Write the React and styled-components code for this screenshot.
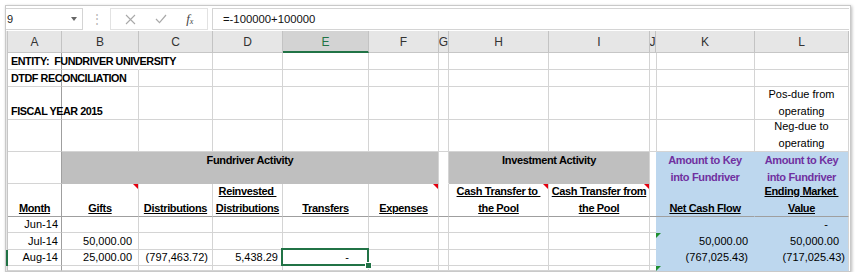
import React from "react";
import styled, { createGlobalStyle, css } from "styled-components";

const GRID = "#d4d4d4";
const FREEZE = "#9f9f9f";
const BLUE = "#bdd7ee";
const GRAY = "#bfbfbf";
const GREEN = "#217346";

const GlobalStyle = createGlobalStyle`
  html, body {
    margin: 0;
    background: #fff;
    font-family: "Liberation Sans", Arial, sans-serif;
  }
`;

const Window = styled.div`
  margin: 5px 0 0 5px;
  width: 844px;
  height: 265px;
  border: 1px solid #c9c9c9;
  box-shadow: 1px 1px 3px rgba(0, 0, 0, 0.28);
  background: #fff;
  overflow: hidden;
`;

const Toolbar = styled.div`
  height: 25px;
  display: flex;
  align-items: center;
  box-sizing: border-box;
  padding-top: 1px;
`;

const NameBox = styled.div`
  width: 77px;
  height: 22px;
  box-sizing: border-box;
  border: 1px solid #d4d4d4;
  border-left: none;
  display: flex;
  align-items: center;
  justify-content: space-between;
  padding: 0 5px 0 1px;
  font-size: 11px;
  color: #222;
`;

const DropArrow = styled.span`
  width: 0;
  height: 0;
  border-left: 3.5px solid transparent;
  border-right: 3.5px solid transparent;
  border-top: 4px solid #666;
`;

const Grip = styled.div`
  width: 27px;
  text-align: center;
  color: #b5b5b5;
  font-size: 12px;
  line-height: 1;
`;

const FxGroup = styled.div`
  width: 98px;
  height: 22px;
  box-sizing: border-box;
  border: 1px solid #e2e2e2;
  display: flex;
  align-items: center;
  justify-content: space-around;
  padding: 0 4px;
`;

const FxText = styled.span`
  font-family: "Liberation Serif", "Times New Roman", serif;
  font-style: italic;
  font-size: 13px;
  color: #444;

  sub {
    font-size: 8px;
    vertical-align: -1px;
  }
`;

const FormulaInput = styled.div`
  flex: 1;
  margin-left: 4px;
  margin-right: 1px;
  height: 22px;
  box-sizing: border-box;
  border: 1px solid #d4d4d4;
  border-right: none;
  display: flex;
  align-items: center;
  padding-left: 10px;
  font-size: 11.3px;
  color: #111;
`;

const Sheet = styled.div`
  display: grid;
  grid-template-columns: 2px 54px 77px 74px 70px 86px 70px 10px 100px 101px 6px 99px 94px;
  grid-template-rows: 22px 17px 17px 33px 32px 32px 33px 16px 17px 16px 5px;
  font-size: 11px;
`;

const Stub = styled.div`
  background: ${(p) => (p.$on ? GREEN : "#e6e6e6")};
  border-right: ${(p) => (p.$on ? "none" : "1px solid #c6c6c6")};
  box-sizing: border-box;
`;

const ColHead = styled.div`
  box-sizing: border-box;
  background: ${(p) => (p.$active ? "#d3d3d3" : "#e6e6e6")};
  border-right: 1px solid #c3c3c3;
  border-bottom: ${(p) => (p.$active ? `2px solid ${GREEN}` : "1px solid #c6c6c6")};
  color: ${(p) => (p.$active ? GREEN : "#333")};
  display: flex;
  align-items: flex-end;
  justify-content: center;
  padding-bottom: ${(p) => (p.$active ? 2 : 3)}px;
  font-size: 12px;
  overflow: hidden;
`;

const Cell = styled.div`
  box-sizing: border-box;
  min-width: 0;
  position: relative;
  display: flex;
  flex-direction: column;
  justify-content: ${(p) =>
    p.$v === "top" ? "flex-start" : p.$v === "mid" ? "center" : "flex-end"};
  align-items: ${(p) =>
    p.$h === "left" ? "flex-start" : p.$h === "center" ? "center" : "flex-end"};
  text-align: ${(p) => p.$h || "right"};
  padding: 0 ${(p) => p.$pr ?? 3}px 0 ${(p) => p.$pl ?? 3}px;
  background: ${(p) => p.$bg || "transparent"};
  border-right: 1px solid ${(p) => p.$rc || GRID};
  border-bottom: 1px solid ${(p) => p.$bc || GRID};
  grid-column: ${(p) => (p.$span ? `span ${p.$span}` : "auto")};
  font-weight: ${(p) => (p.$bold ? 700 : 400)};
  letter-spacing: ${(p) => (p.$bold ? "-0.35px" : "0")};
  font-size: 11px;
  color: ${(p) => p.$color || "#000"};
  line-height: 16.5px;
  white-space: pre;

  ${(p) =>
    p.$note &&
    css`
      &::after {
        content: "";
        position: absolute;
        top: 0;
        right: 0;
        border-top: 5px solid #e3000f;
        border-left: 5px solid transparent;
      }
    `}

  ${(p) =>
    p.$err &&
    css`
      &::before {
        content: "";
        position: absolute;
        top: 0;
        left: 0;
        border-top: 5px solid #1e8e2e;
        border-right: 5px solid transparent;
      }
    `}

  ${(p) =>
    p.$sel &&
    css`
      &::after {
        content: "";
        position: absolute;
        top: -2px;
        left: -2px;
        right: -1px;
        bottom: -1px;
        border: 2px solid ${GREEN};
        z-index: 2;
      }
      &::before {
        content: "";
        position: absolute;
        right: -4px;
        bottom: -4px;
        width: 5px;
        height: 5px;
        background: ${GREEN};
        border: 1px solid #fff;
        z-index: 3;
      }
    `}
`;

const Title = styled.span`
  font-size: 10.8px;
  letter-spacing: -0.45px;
`;

const U = styled.span`
  text-decoration: underline;
  text-underline-offset: 1px;
`;

const XIcon = () => (
  <svg width="11" height="11" viewBox="0 0 11 11">
    <path d="M1 1 L10 10 M10 1 L1 10" stroke="#a9a9a9" strokeWidth="1.1" fill="none" />
  </svg>
);

const CheckIcon = () => (
  <svg width="12" height="10" viewBox="0 0 12 10">
    <path d="M1 5 L4.5 8.6 L11 1" stroke="#a9a9a9" strokeWidth="1.2" fill="none" />
  </svg>
);

const letters = ["A", "B", "C", "D", "E", "F", "G", "H", "I", "J", "K", "L"];

const Blue = (props) => <Cell $bg={BLUE} $rc={BLUE} $bc={BLUE} {...props} />;

const Empty = ({ n }) => Array.from({ length: n }, (_, i) => <Cell key={i} />);

export default function App() {
  return (
    <>
      <GlobalStyle />
      <Window>
        <Toolbar>
          <NameBox>
            <span>9</span>
            <DropArrow />
          </NameBox>
          <Grip>⋮</Grip>
          <FxGroup>
            <XIcon />
            <CheckIcon />
            <FxText>
              f<sub>x</sub>
            </FxText>
          </FxGroup>
          <FormulaInput>=-100000+100000</FormulaInput>
        </Toolbar>

        <Sheet>
          {/* column headers */}
          <Stub />
          {letters.map((l) => (
            <ColHead key={l} $active={l === "E"}>
              {l}
            </ColHead>
          ))}

          {/* row 1 */}
          <Stub />
          <Cell $h="left" $bold $rc={FREEZE}>
            <Title>{"ENTITY:  FUNDRIVER UNIVERSITY"}</Title>
          </Cell>
          <Cell $rc="transparent" />
          <Empty n={10} />

          {/* row 2 */}
          <Stub />
          <Cell $h="left" $bold $rc={FREEZE}>
            <Title>DTDF RECONCILIATION</Title>
          </Cell>
          <Empty n={11} />

          {/* row 3 */}
          <Stub />
          <Cell $h="left" $bold $rc={FREEZE}>
            <Title>FISCAL YEAR 2015</Title>
          </Cell>
          <Empty n={10} />
          <Cell $h="center">
            <span>Pos-due from</span>
            <span>operating</span>
          </Cell>

          {/* row 4 */}
          <Stub />
          <Cell $rc={FREEZE} />
          <Empty n={10} />
          <Cell $h="center">
            <span>Neg-due to</span>
            <span>operating</span>
          </Cell>

          {/* row 5 */}
          <Stub />
          <Cell $rc={FREEZE} />
          <Cell $span={5} $bg={GRAY} $bc={GRAY} $h="center" $v="top" $bold>
            Fundriver Activity
          </Cell>
          <Cell $bc="transparent" />
          <Cell $span={2} $bg={GRAY} $bc={GRAY} $h="center" $v="top" $bold>
            Investment Activity
          </Cell>
          <Cell $bc="transparent" />
          <Blue $h="center" $v="top" $bold $color="#7030a0">
            <span>Amount to Key</span>
            <span>into Fundriver</span>
          </Blue>
          <Blue $h="center" $v="top" $bold $color="#7030a0" $rc={GRID}>
            <span>Amount to Key</span>
            <span>into Fundriver</span>
          </Blue>

          {/* row 6 */}
          <Stub />
          <Cell $h="center" $bold $rc={FREEZE} $bc={FREEZE}>
            <U>Month</U>
          </Cell>
          <Cell $h="center" $bold $bc={FREEZE} $note>
            <U>Gifts</U>
          </Cell>
          <Cell $h="center" $bold $bc={FREEZE}>
            <U>Distributions</U>
          </Cell>
          <Cell $h="center" $bold $bc={FREEZE}>
            <U>{"Reinvested "}</U>
            <U>Distributions</U>
          </Cell>
          <Cell $h="center" $bold $bc={FREEZE}>
            <U>Transfers</U>
          </Cell>
          <Cell $h="center" $bold $bc={FREEZE} $note>
            <U>Expenses</U>
          </Cell>
          <Cell $bc={FREEZE} />
          <Cell $h="center" $bold $bc={FREEZE} $note>
            <U>{"Cash Transfer to "}</U>
            <U>the Pool</U>
          </Cell>
          <Cell $h="center" $bold $bc={FREEZE} $note>
            <U>Cash Transfer from</U>
            <U>the Pool</U>
          </Cell>
          <Cell $bc={FREEZE} />
          <Blue $h="center" $bold $bc={FREEZE}>
            <U>Net Cash Flow</U>
          </Blue>
          <Blue $h="center" $bold $bc={FREEZE} $rc={GRID}>
            <U>{"Ending Market "}</U>
            <U>Value</U>
          </Blue>

          {/* Jun-14 */}
          <Stub />
          <Cell $rc={FREEZE}>Jun-14</Cell>
          <Empty n={9} />
          <Blue />
          <Blue $rc={GRID} $pr={20}>
            -
          </Blue>

          {/* Jul-14 */}
          <Stub />
          <Cell $rc={FREEZE}>Jul-14</Cell>
          <Cell $pr={6}>50,000.00</Cell>
          <Empty n={8} />
          <Blue $pr={6} $err>
            50,000.00
          </Blue>
          <Blue $rc={GRID} $pr={9}>
            50,000.00
          </Blue>

          {/* Aug-14 */}
          <Stub $on />
          <Cell $rc={FREEZE}>Aug-14</Cell>
          <Cell $pr={6}>25,000.00</Cell>
          <Cell $pr={4}>(797,463.72)</Cell>
          <Cell $pr={4}>5,438.29</Cell>
          <Cell $pr={19} $sel>
            -
          </Cell>
          <Empty n={5} />
          <Blue $pr={6}>(767,025.43)</Blue>
          <Blue $rc={GRID} $pr={3}>
            (717,025.43)
          </Blue>

          {/* partial next row */}
          <Stub />
          <Cell $rc={FREEZE} />
          <Empty n={9} />
          <Blue $err />
          <Blue $rc={GRID} />
        </Sheet>
      </Window>
    </>
  );
}
